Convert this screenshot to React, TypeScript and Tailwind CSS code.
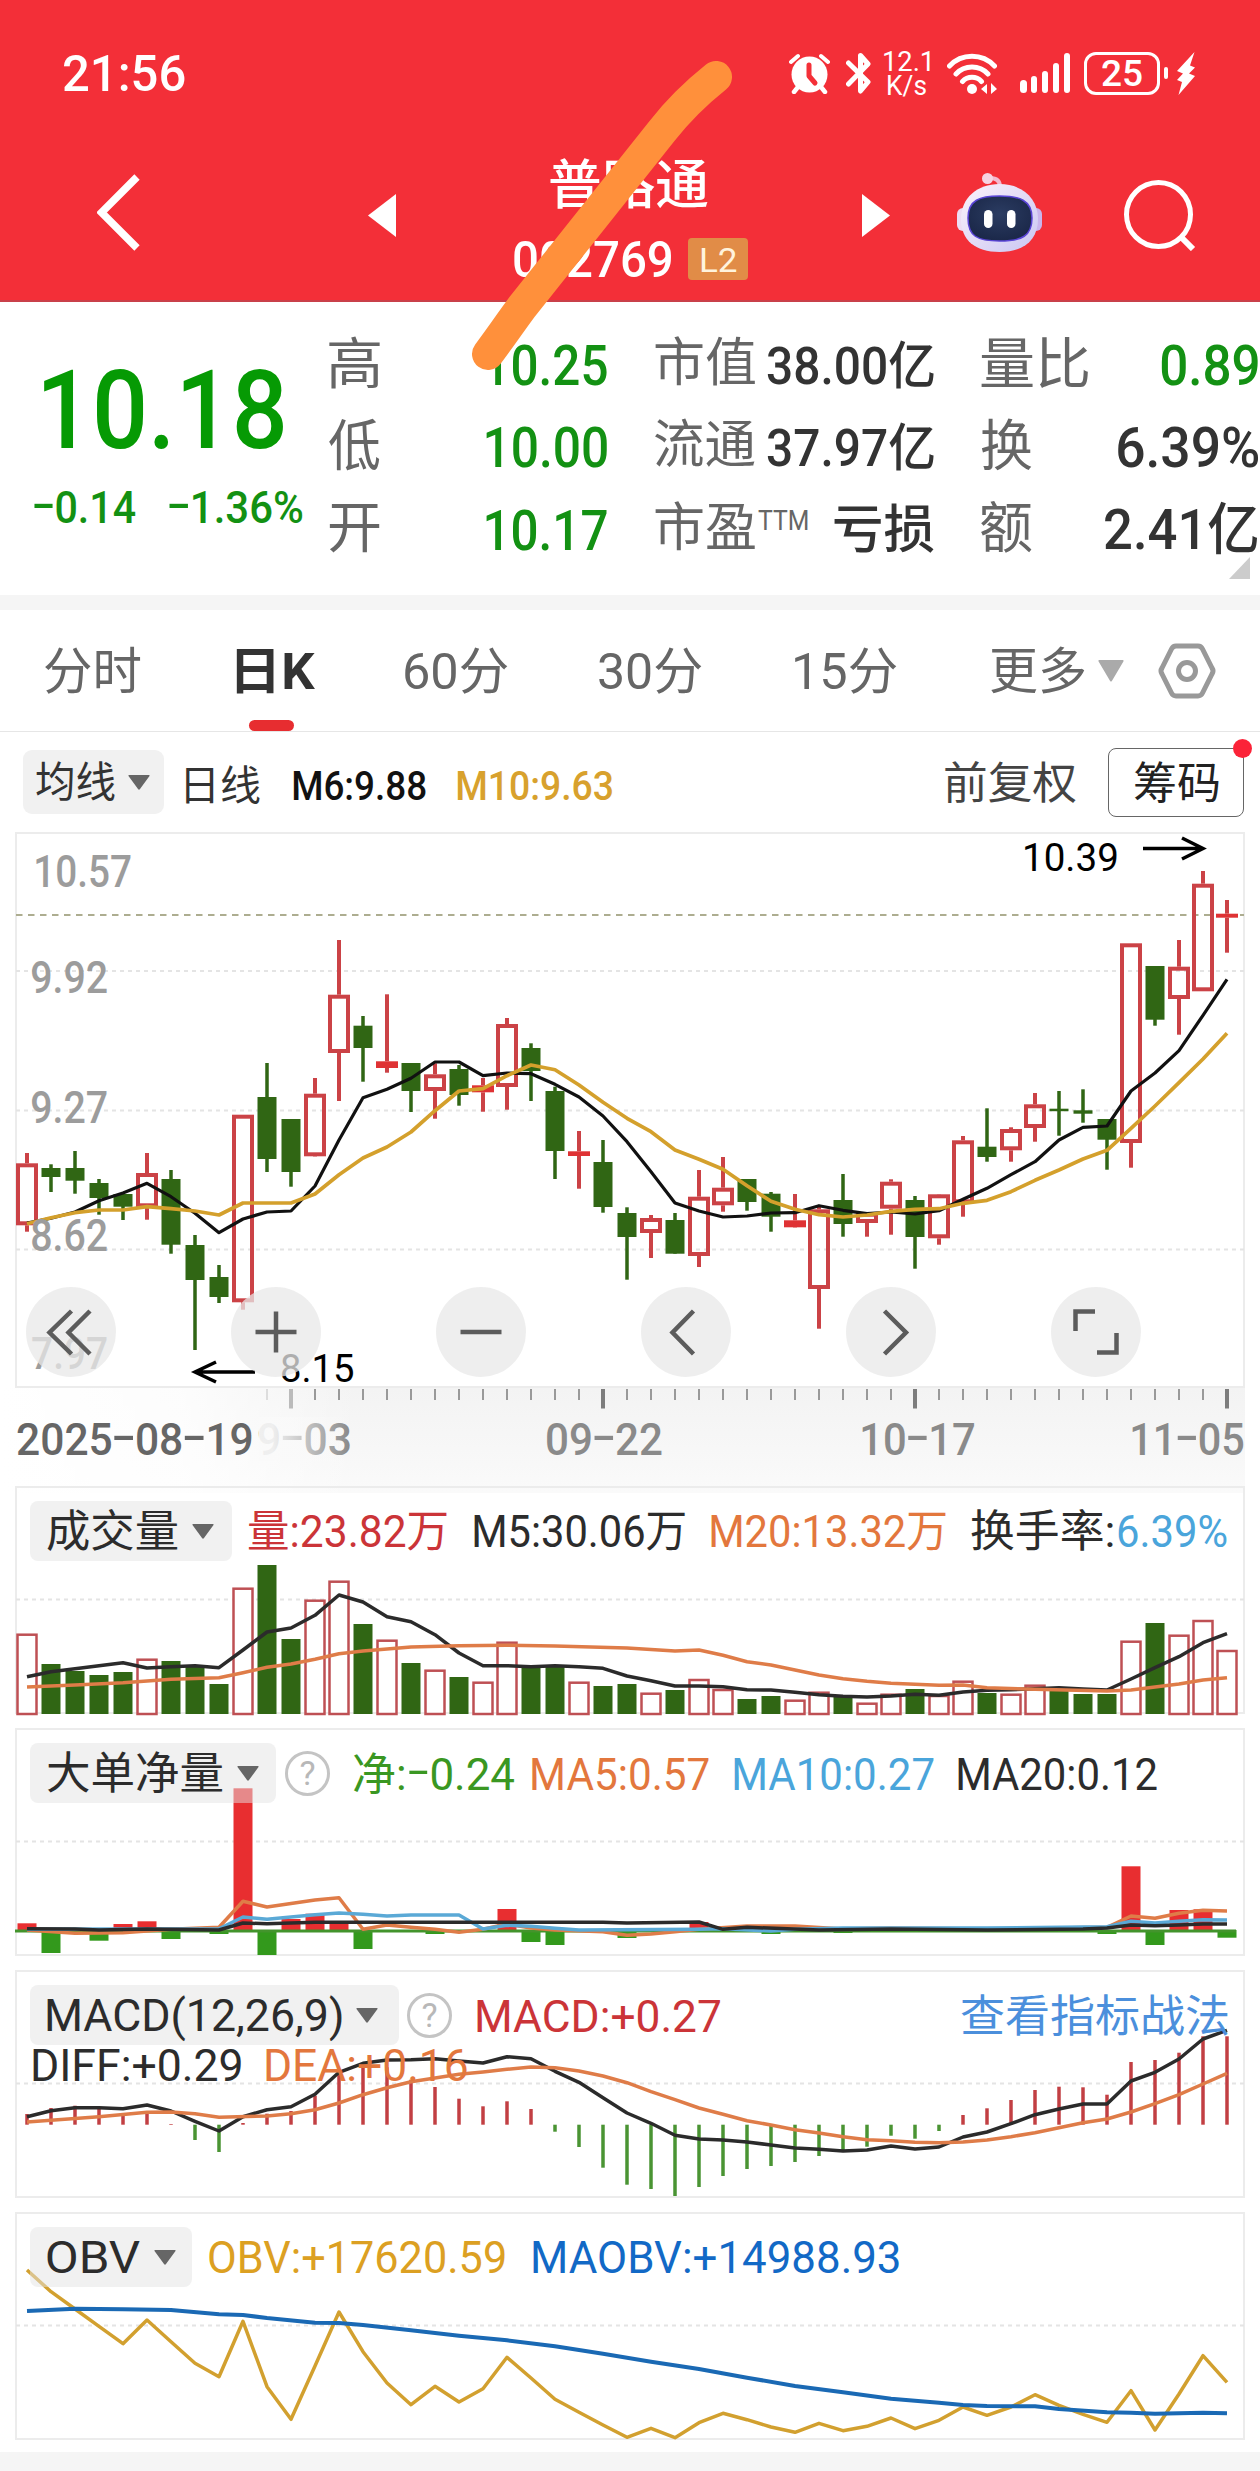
import React, { useLayoutEffect, useRef, useState } from "react";

/* ---------- text ---------- */

const FONT = "font-[Roboto,'Noto_Sans_CJK_SC',sans-serif]";

/** Text whose glyphs are stretched so that they fill the width given by the class. */
function Fit({ children, className = "", inner = "" }: { children: string; className?: string; inner?: string }) {
  const outer = useRef<HTMLSpanElement>(null);
  const span = useRef<HTMLSpanElement>(null);
  const [t, setT] = useState("none");
  useLayoutEffect(() => {
    const o = outer.current;
    const s = span.current;
    const ctx = document.createElement("canvas").getContext("2d");
    if (!o || !s || !ctx) return;
    const cs = getComputedStyle(s);
    ctx.font = `${cs.fontWeight} ${cs.fontSize} ${cs.fontFamily}`;
    const first = ctx.measureText(children[0]);
    const last = ctx.measureText(children[children.length - 1]);
    const left = -first.actualBoundingBoxLeft;
    const right = last.width - last.actualBoundingBoxRight;
    const k = o.clientWidth / (s.offsetWidth - left - right);
    setT(`translate(${-left * k}px, 1px) scaleX(${k})`);
  }, [children]);
  return (
    <span ref={outer} className={`block shrink-0 whitespace-nowrap leading-none ${className}`}>
      <span ref={span} className={`inline-block origin-left ${inner}`} style={{ transform: t }}>
        {children.split(/(-)/).map((p, i) =>
          p === "-" ? (
            <span key={i} className="inline-block w-[0.52em] -translate-y-[0.08em] scale-x-[1.7] text-center">
              -
            </span>
          ) : (
            p
          ),
        )}
      </span>
    </span>
  );
}

function Down({ className = "w-[22px] h-[15px] text-[#666]" }: { className?: string }) {
  return (
    <svg viewBox="0 0 22 15" preserveAspectRatio="none" className={`block shrink-0 ${className}`}>
      <path d="M1 0h20q1 0 .5 1L12 14q-1 1.500-2 0L.5 1Q0 0 1 0z" fill="currentColor" />
    </svg>
  );
}

function Help({ className = "" }: { className?: string }) {
  return (
    <span
      className={`flex h-[45px] w-[45px] shrink-0 items-center justify-center rounded-full border-[3px] border-[#c4c4c4] text-[34px] leading-none text-[#b8b8b8] ${className}`}
    >
      ?
    </span>
  );
}

/* ---------- header ---------- */

function StatusBar() {
  return (
    <div className="flex h-[146px] items-center text-white">
      <Fit className="ml-[64px] w-[121px] text-[50px] font-medium">21:56</Fit>
      <svg className="ml-[604px] h-[41px] w-[41px] shrink-0" viewBox="0 0 41 41">
        <circle cx="20.500" cy="21.500" r="18" fill="#fff" />
        <path d="M2 9L9 3M39 9L32 3" stroke="#fff" strokeWidth="4" strokeLinecap="round" />
        <path d="M9 34l-4 5M32 34l4 5" stroke="#fff" strokeWidth="4.500" strokeLinecap="round" />
        <path d="M20 12v11l6 7" stroke="#f43038" strokeWidth="5" strokeLinecap="round" strokeLinejoin="round" fill="none" />
      </svg>
      <svg className="ml-[16px] h-[41px] w-[25px] shrink-0" viewBox="0 0 25 41" fill="none" stroke="#fff" strokeWidth="5" strokeLinejoin="round" strokeLinecap="round">
        <path d="M2.500 10L22 29l-7.500 9V2.500L22 11 2.500 31" />
      </svg>
      <div className="ml-[13px] flex flex-col items-center">
        <Fit className="w-[46px] text-[28px] !leading-[24px]">12.1</Fit>
        <Fit className="w-[39px] text-[28px] !leading-[24px]">K/s</Fit>
      </div>
      <svg className="ml-[17px] h-[41px] w-[50px] shrink-0" viewBox="0 0 50 41" fill="none" stroke="#fff" strokeLinecap="round">
        <path d="M2.500 13a31 31 0 0 1 45 0M9 21a22 22 0 0 1 32 0M15.500 28.500a13 13 0 0 1 19 0" strokeWidth="5" />
        <circle cx="25" cy="36" r="5" fill="#fff" stroke="none" />
        <path d="M34 36l6-5v10zM50 36l-6-6v11z" fill="#fff" stroke="none" />
      </svg>
      <div className="ml-[23px] flex h-[40px] w-[50px] shrink-0 items-end justify-between">
        <i className="h-[13px] w-[6.5px] rounded-full bg-white" />
        <i className="h-[17px] w-[6.5px] rounded-full bg-white" />
        <i className="h-[22px] w-[6.5px] rounded-full bg-white" />
        <i className="h-[30px] w-[6.5px] rounded-full bg-white" />
        <i className="h-[40px] w-[6.5px] rounded-full bg-white" />
      </div>
      <div className="ml-[14px] flex h-[43px] w-[76px] shrink-0 items-center justify-center rounded-[12px] border-[3px] border-white">
        <Fit className="-mt-[1px] w-[40px] text-[37px] font-medium">25</Fit>
      </div>
      <i className="ml-[4px] h-[12px] w-[4px] shrink-0 rounded-full bg-white" />
      <svg className="ml-[8px] h-[43px] w-[20px] shrink-0" viewBox="0 0 20 43">
        <path d="M18.500 0L1 19l6 2.500-6 6.500 5 2L2.500 43 19 24l-6-2.500 6-6-5-2z" fill="#fff" />
      </svg>
    </div>
  );
}

function Robot() {
  return (
    <svg className="ml-[66px] mt-[27px] h-[80px] w-[87px] shrink-0" viewBox="0 0 87 80">
      <defs>
        <linearGradient id="shell" x1="0" y1="0" x2="1" y2="1">
          <stop offset="0" stopColor="#fbf2fa" />
          <stop offset=".5" stopColor="#e3dcf7" />
          <stop offset="1" stopColor="#c9c6f2" />
        </linearGradient>
        <radialGradient id="face" cx=".5" cy=".4" r=".6">
          <stop offset="0" stopColor="#2b3c62" />
          <stop offset="1" stopColor="#1b2849" />
        </radialGradient>
      </defs>
      <path d="M44 14Q44 5 34 5" fill="none" stroke="#f3b9cf" strokeWidth="4" />
      <circle cx="31.500" cy="5.500" r="5.500" fill="#f6d3e2" />
      <rect x="1" y="35" width="14" height="23" rx="6" fill="#ecdcf3" />
      <rect x="72" y="35" width="14" height="23" rx="6" fill="#c9b5ec" />
      <path d="M43.500 11C66 11 82 25 82 46S68 79 43.500 79 5 67 5 46 21 11 43.500 11z" fill="url(#shell)" />
      <path d="M43.500 23C63 23 76 27 76 45S66 68 43.500 68 12 63 12 45s12-22 31.500-22z" fill="url(#face)" stroke="#5a45d6" strokeWidth="1.500" />
      <rect x="28" y="37" width="8.500" height="18" rx="4.250" fill="#fff" />
      <rect x="51" y="37" width="8.500" height="18" rx="4.250" fill="#fff" />
    </svg>
  );
}

function Header() {
  return (
    <header className="relative h-[302px] border-b-2 border-[#c9404a] bg-[#f32f38]">
      <StatusBar />
      <div className="flex items-start text-white">
        <svg className="ml-[97px] mt-[28px] h-[77px] w-[43px] shrink-0" viewBox="0 0 43 77">
          <path d="M40 3L4.500 38.500 40 74" fill="none" stroke="#fff" strokeWidth="7.500" />
        </svg>
        <svg className="ml-[228px] mt-[48px] h-[43px] w-[28px] shrink-0" viewBox="0 0 28 43">
          <path d="M28 0v43L0 21.500z" fill="#fff" />
        </svg>
        <div className="ml-[118px] w-[234px] shrink-0">
          <div className="flex h-[79px] items-center">
            <Fit className="ml-[36px] w-[158px] text-[53px] font-medium">普路通</Fit>
          </div>
          <div className="flex h-[68px] items-center justify-between">
            <Fit className="w-[158px] text-[50px] font-medium">002769</Fit>
            <div className="flex h-[42px] w-[60px] items-center justify-center rounded-[4px] bg-[#e18c47]">
              <Fit className="w-[35px] text-[34px] text-[#fff3dc]">L2</Fit>
            </div>
          </div>
        </div>
        <svg className="ml-[114px] mt-[48px] h-[43px] w-[28px] shrink-0" viewBox="0 0 28 43">
          <path d="M0 0v43l28-21.500z" fill="#fff" />
        </svg>
        <Robot />
        <svg className="ml-[81px] mt-[33px] h-[72px] w-[72px] shrink-0" viewBox="0 0 72 72" fill="none" stroke="#fff" strokeWidth="5">
          <circle cx="34.500" cy="35.500" r="32" />
          <path d="M56 57l13 13" strokeWidth="6" />
        </svg>
      </div>
    </header>
  );
}

/* ---------- quote ---------- */

function Quote() {
  const label = "-mt-[4px] text-[#666]";
  const green = "text-[#139113] font-medium";
  const dark = "text-[#333] font-medium";
  return (
    <section className="relative flex h-[293px] bg-white">
      <div className="w-[329px] shrink-0">
        <Fit className="ml-[44px] mt-[53px] w-[240px] text-[110px] font-medium text-[#069a04]">10.18</Fit>
        <div className="mt-[20px] flex">
          <Fit className={`ml-[34px] w-[101px] text-[44px] ${green}`}>-0.14</Fit>
          <Fit className={`ml-[34px] w-[134px] text-[44px] ${green}`}>-1.36%</Fit>
        </div>
      </div>
      <div className="mt-[22px] grid h-[247px] w-[931px] grid-cols-[157px_169px_326px_279px] grid-rows-3 items-center">
        <Fit className={`w-[51px] text-[55px] ${label}`}>高</Fit>
        <Fit className={`w-[121px] text-[56px] ${green}`}>10.25</Fit>
        <div className="flex w-[279px] items-center justify-between">
          <Fit className={`w-[100px] text-[52px] ${label}`}>市值</Fit>
          <Fit className={`w-[167px] text-[51px] ${dark}`}>38.00亿</Fit>
        </div>
        <div className="flex w-[277px] items-center justify-between">
          <Fit className={`w-[107px] text-[55px] ${label}`}>量比</Fit>
          <Fit className={`w-[97px] text-[56px] ${green}`}>0.89</Fit>
        </div>
        <Fit className={`w-[51px] text-[55px] ${label}`}>低</Fit>
        <Fit className={`w-[121px] text-[56px] ${green}`}>10.00</Fit>
        <div className="flex w-[279px] items-center justify-between">
          <Fit className={`w-[100px] text-[52px] ${label}`}>流通</Fit>
          <Fit className={`w-[167px] text-[51px] ${dark}`}>37.97亿</Fit>
        </div>
        <div className="flex w-[277px] items-center justify-between">
          <Fit className={`w-[51px] text-[55px] ${label}`}>换</Fit>
          <Fit className={`w-[140px] text-[56px] ${dark}`}>6.39%</Fit>
        </div>
        <Fit className={`w-[51px] text-[55px] ${label}`}>开</Fit>
        <Fit className={`w-[121px] text-[56px] ${green}`}>10.17</Fit>
        <div className="flex w-[279px] items-center">
          <Fit className={`w-[100px] text-[52px] ${label}`}>市盈</Fit>
          <Fit className="mb-[20px] ml-[3px] w-[50px] text-[28px] text-[#666]">TTM</Fit>
          <Fit className={`ml-auto w-[100px] text-[52px] ${dark}`}>亏损</Fit>
        </div>
        <div className="flex w-[277px] items-center justify-between">
          <Fit className={`w-[51px] text-[55px] ${label}`}>额</Fit>
          <Fit className={`-mt-[2px] w-[153px] text-[56px] ${dark}`}>2.41亿</Fit>
        </div>
      </div>
      <svg className="absolute bottom-[16px] right-[10px] h-[22px] w-[21px]" viewBox="0 0 21 22">
        <path d="M21 0v22H0z" fill="#ccc" />
      </svg>
    </section>
  );
}

/* ---------- tabs ---------- */

function Tabs() {
  const tab = "text-[50px] text-[#666]";
  return (
    <nav className="flex h-[122px] items-center border-b border-[#e6e6e6] bg-white">
      <Fit className={`ml-[45px] w-[96px] ${tab}`}>分时</Fit>
      <div className="relative ml-[95px] flex h-full items-center">
        <Fit className="w-[80px] text-[50px] font-bold text-[#333]">日K</Fit>
        <i className="absolute bottom-0 left-[13px] h-[11px] w-[45px] rounded-full bg-[#e72d30]" />
      </div>
      <Fit className={`ml-[89px] w-[103px] ${tab}`}>60分</Fit>
      <Fit className={`ml-[91px] w-[103px] ${tab}`}>30分</Fit>
      <Fit className={`ml-[93px] w-[102px] ${tab}`}>15分</Fit>
      <Fit className={`ml-[94px] w-[94px] ${tab}`}>更多</Fit>
      <Down className="ml-[13px] h-[22px] w-[26px] text-[#aaa]" />
      <svg className="ml-[34px] h-[56px] w-[58px] shrink-0" viewBox="0 0 58 56" fill="none" stroke="#999" strokeWidth="5">
        <path d="M18 3h22q3 0 4.500 3L54 25q2 3 0 6L44.500 50q-1.500 3-4.500 3H18q-3 0-4.500-3L4 31q-2-3 0-6l9.500-19Q15 3 18 3z" strokeLinejoin="round" />
        <circle cx="29" cy="28" r="8.500" />
      </svg>
    </nav>
  );
}

function AverageRow() {
  return (
    <div className="flex h-[100px] items-center">
      <div className="ml-[23px] flex h-[64px] w-[141px] shrink-0 items-center rounded-[9px] bg-[#f1f1f1] pl-[13px]">
        <Fit className="w-[79px] text-[42px] text-[#333]">均线</Fit>
        <Down className="ml-[13px] h-[15px] w-[22px] text-[#666]" />
      </div>
      <Fit className="ml-[22px] mt-[6px] w-[74px] text-[41px] text-[#333]">日线</Fit>
      <Fit className="ml-[33px] mt-[7px] w-[133px] text-[40px] font-medium text-[#111]">M6:9.88</Fit>
      <Fit className="ml-[31px] mt-[7px] w-[155px] text-[40px] font-medium text-[#d8a12d]">M10:9.63</Fit>
      <Fit className="ml-[333px] mt-[2px] w-[131px] text-[44px] text-[#444]">前复权</Fit>
      <div className="relative ml-[32px] flex h-[69px] w-[136px] shrink-0 items-center justify-center rounded-[8px] border-[1.5px] border-[#666]">
        <Fit className="mt-[2px] w-[85px] text-[44px] text-[#222]">筹码</Fit>
        <i className="absolute -right-[9px] -top-[10px] h-[19px] w-[19px] rounded-full bg-[#fb2338]" />
      </div>
    </div>
  );
}

/* ---------- chart data ---------- */

const RED = "#cb4246";
const GREEN = "#306614";
const X = (i: number) => 27 + 24 * i;

type Series = Array<[number, number]>;
const seq = (ys: number[]): Series => ys.map((y, i) => [i, y]);

// kind, high, body top, body bottom, low
const CANDLES: Array<[string, number, number, number, number]> = [
  ["r", 321, 331.3, 393.3, 399.7], ["g", 332.3, 336, 345, 360], ["g", 319, 336, 348.7, 361.7],
  ["g", 347, 351, 366, 382.7], ["g", 361.3, 362, 374.7, 388], ["r", 321, 341, 375.3, 387.7],
  ["g", 338, 347, 412.7, 421.7], ["g", 403, 413, 448, 518], ["g", 433, 445, 465, 471],
  ["r", 282.7, 282.7, 470.3, 477.7], ["g", 231, 265, 327, 340], ["g", 287, 287, 340, 354.7],
  ["r", 246, 261.7, 324.3, 324.7], ["r", 108, 162.7, 221, 269], ["g", 184, 193.7, 216, 249.7],
  ["r", 162.3, 229.3, 236, 240.7], ["g", 231, 231, 259, 280], ["r", 231.3, 242.3, 259, 286.7],
  ["g", 233, 237, 263, 273.7], ["r", 246, 253.3, 260.3, 279.7], ["r", 186, 192, 255, 277.7],
  ["g", 211.3, 216, 239, 269], ["g", 254.7, 259, 319, 347], ["r", 299, 319.3, 324, 356.7],
  ["g", 308, 330, 375, 380.7], ["g", 375.3, 381, 405, 447.7], ["r", 383, 386, 401, 426],
  ["g", 381, 388, 421.7, 421.7], ["r", 338, 364.7, 424, 435], ["r", 325, 355.7, 373.3, 379.7],
  ["g", 347, 347, 370, 378.7], ["g", 360, 361.7, 384.7, 399.7], ["r", 362, 388.3, 395.3, 395.7],
  ["r", 375, 377.3, 457, 496.7], ["g", 342, 368, 392, 404.7], ["r", 380, 380.7, 391, 404.7],
  ["r", 347.3, 349.7, 376.7, 402.7], ["g", 364, 368, 405, 436.7], ["r", 362, 362.3, 406.3, 412.7],
  ["r", 304, 308.3, 371.3, 384.7], ["g", 276.3, 314.7, 325, 329.7], ["r", 295.3, 297, 318.3, 329.7],
  ["r", 261, 272.3, 296, 309.7], ["g", 259, 276.7, 279.2, 303.7], ["g", 257.3, 278.3, 281.7, 290.7],
  ["g", 287, 287, 307.7, 337.7], ["r", 111.3, 111.3, 311, 335.7], ["g", 134, 134, 187.7, 193.7],
  ["r", 108, 134.7, 167, 202.7], ["r", 39, 51.7, 159.3, 159.3], ["r", 68, 81.7, 85.7, 120.7],
];
const MA6 = seq([
  391, 386.3, 380, 368.7, 361, 351.3, 364.7, 381.3, 400.7, 387, 380, 379, 354, 308, 265.7, 257.3, 246.3, 230, 230, 243.7,
  241, 241.7, 252.3, 265, 284, 309.7, 339.7, 371, 379, 385, 384, 381, 380.7, 373.7, 378.3, 381.7, 380, 382, 378.7, 367.3,
  356.3, 342.7, 329.7, 308, 295.3, 294, 259, 241, 218.7, 183.3, 147.3,
]);
const MA10 = seq([
  391.7, 385.7, 380.7, 378, 378, 374.7, 376.7, 379, 383, 371, 371, 371, 362, 342.7, 326, 315, 300, 278.7, 259, 256.7,
  243.7, 233, 237.7, 253, 270.3, 286.3, 299.7, 318, 327.3, 337.3, 353.7, 369.3, 377.3, 382.7, 385, 383, 379.3, 377.3,
  376.7, 371.3, 368.3, 359.7, 348.3, 338, 327, 318.3, 296.3, 274, 250.7, 227, 201.3,
]);

const VOLUME: Array<[string, number]> = [
  ["r", 147.7], ["g", 178], ["g", 185], ["g", 189], ["g", 186], ["r", 172.7], ["g", 175], ["g", 180.7], ["g", 198],
  ["r", 101.7], ["g", 79], ["g", 153], ["r", 113.7], ["r", 94.7], ["g", 138], ["r", 153.7], ["g", 177], ["r", 183.7],
  ["g", 191], ["r", 195.7], ["r", 155.7], ["g", 181], ["g", 181], ["r", 195.7], ["g", 200], ["g", 198], ["r", 206.7],
  ["g", 204], ["r", 193], ["r", 203], ["g", 213], ["g", 210], ["r", 213.7], ["r", 205.7], ["g", 211], ["r", 216.7],
  ["r", 207.7], ["g", 203], ["r", 209], ["r", 194.7], ["g", 207], ["r", 207.7], ["r", 198.7], ["g", 204.7], ["g", 208],
  ["g", 208], ["r", 154.7], ["g", 137], ["r", 148.7], ["r", 134], ["r", 164],
];
const VOL5 = seq([
  190.7, 185.7, 182.7, 179.7, 176.7, 182, 180.7, 179.7, 181.7, 164, 146, 142, 129.3, 109, 116, 130.7, 135.7, 148.7, 167,
  179.7, 179.7, 180.7, 179.7, 180.7, 182.3, 190, 194.7, 200, 200, 200.7, 203.7, 204, 206.3, 208.7, 210.3, 211, 210, 208.3,
  209.3, 206, 204.3, 203.7, 202.7, 201.7, 203, 204, 193, 181.7, 170.7, 156.7, 147.7,
]);
const VOL20: Series = [
  [0, 201], [2, 199], [4, 196.7], [6, 193.3], [8, 191.7], [9, 186.7], [10, 181.3], [11, 178], [12, 173.3], [13, 167.7],
  [14, 165], [16, 161], [18, 159.7], [20, 159.3], [22, 160], [25, 162], [27, 165], [28, 164], [29, 169.3], [30, 175.7],
  [31, 179], [32, 184], [33, 189], [34, 192.7], [35, 195.3], [36, 197.3], [38, 199.3], [39, 199], [40, 201.7],
  [42, 203.3], [45, 205], [46, 204], [47, 201], [48, 198], [49, 194], [50, 191.7],
];

const NET: Series = [
  [0, 195.3], [1, 225], [3, 212.7], [4, 196], [5, 193.3], [6, 211], [8, 206], [9, 60.3], [10, 227], [11, 191],
  [12, 185.7], [13, 193.3], [14, 221], [17, 206], [20, 181], [21, 214], [22, 217], [25, 210], [28, 194], [31, 206],
  [34, 205], [45, 206], [46, 138.3], [47, 217], [48, 182], [49, 181.3], [50, 209.7],
];
const NET20: Series = [
  [0, 200.7], [2, 201], [3, 202], [5, 201], [8, 202], [9, 195], [10, 195.7], [12, 194.3], [20, 194.3], [24, 194.3],
  [25, 195], [28, 194], [29, 201.3], [30, 199.3], [33, 202], [36, 201], [40, 202], [44, 201], [45, 200], [46, 197],
  [47, 197.7], [48, 197], [49, 196], [50, 196],
];
const NET5: Series = [
  [0, 202], [2, 205.3], [4, 204.7], [6, 201.3], [8, 199.3], [9, 173.3], [10, 179], [12, 172], [13, 169.7], [14, 201.3],
  [15, 197], [16, 199.3], [17, 201.3], [18, 204.3], [19, 201.3], [20, 196], [21, 200], [22, 202], [24, 203.7],
  [25, 207.3], [26, 206], [27, 203.7], [28, 201.3], [30, 198], [32, 198], [34, 201], [36, 200], [40, 201], [45, 199.3],
  [46, 188], [47, 190.3], [48, 185.3], [49, 182.3], [50, 183],
];
const NET10: Series = [
  [0, 201.3], [8, 200.7], [9, 189], [10, 191.3], [11, 189], [12, 186.7], [13, 185], [14, 186.3], [15, 188], [16, 187],
  [18, 187], [19, 201], [20, 197.3], [21, 198.3], [22, 200.3], [23, 202], [28, 201.3], [29, 200.7], [31, 203],
  [32, 201.3], [34, 200], [40, 200], [45, 198.7], [46, 193.3], [47, 195], [48, 193.3], [49, 191.7], [50, 192],
];

const MACD = [
  144, 138, 135.7, 137.7, 144.7, 143, 154, 170, 182, 153, 143.7, 141, 125.7, 103, 95, 97.3, 109.7, 117, 128.7, 136.3,
  131.3, 139, 161.7, 177, 197.7, 214.7, 219, 226, 217, 206, 199, 196, 192, 186, 181.3, 176.7, 165.7, 168.7, 161, 145,
  138.3, 130, 120, 116.7, 117.3, 124.7, 92, 90, 82.7, 66.3, 66.3,
];
const DIFF = seq([
  146.7, 140.7, 137.7, 137.7, 138.7, 135, 141, 151.3, 161, 146.7, 139.7, 136.7, 124.3, 102.3, 93.3, 90, 89.7, 88.7, 91,
  93, 86.7, 88.7, 101.3, 112.3, 127.7, 143, 153.3, 165.3, 169, 170, 172, 175, 178, 179.3, 181, 180, 176, 179, 177, 167,
  162, 153.7, 144.7, 139, 134, 134, 111, 102.3, 89, 69, 60.3,
]);
const DEA: Series = [
  [0, 152], [3, 146.7], [5, 142.3], [6, 142], [7, 143.7], [8, 147.3], [10, 146], [11, 143.7], [12, 139.7], [13, 133],
  [14, 124.7], [15, 117.7], [16, 111.7], [17, 108], [18, 104.3], [19, 102], [20, 99.3], [21, 97], [22, 97.7], [23, 101],
  [24, 106], [25, 112.7], [26, 121.7], [27, 129.7], [28, 138], [29, 144.3], [30, 150.7], [31, 155], [32, 159.7],
  [33, 163], [34, 166.7], [35, 169.7], [36, 170.7], [37, 172.3], [38, 172.7], [39, 172], [40, 170], [41, 166.7],
  [42, 162.7], [43, 157.7], [44, 152.7], [45, 149], [46, 142], [47, 133.7], [48, 124.7], [49, 114], [50, 103.3],
];
const OBV = seq([
  58, 79.7, 97, 114.3, 131.7, 108, 129.7, 151.3, 164.7, 109.3, 174.7, 207.3, 154, 100, 139.7, 171, 192.7, 174.3, 190,
  176.7, 145.3, 166, 187.3, 200.3, 213, 225.3, 216.3, 225.7, 210.7, 201.3, 207.7, 215, 220.3, 211.3, 218.7, 214.3, 206,
  216.7, 208.3, 195, 203.3, 195, 182.7, 193.3, 202.3, 210.3, 178.7, 218, 182, 143.7, 170.3,
]);
const MAOBV: Series = [
  [0, 99], [2, 96.7], [4, 97.3], [6, 98], [8, 102.3], [9, 103], [10, 106], [12, 110.7], [13, 111], [14, 113],
  [16, 118.3], [18, 123.7], [20, 128.3], [22, 134.3], [24, 141.7], [26, 149.7], [28, 157], [30, 165.7], [32, 174],
  [34, 180.3], [36, 186.7], [38, 190.7], [39, 193], [40, 194], [42, 194.3], [43, 197], [45, 200.3], [46, 200.7],
  [47, 201.7], [49, 200.7], [50, 201.3],
];

function Line({ data, color, w = 3.5 }: { data: Series; color: string; w?: number }) {
  return (
    <polyline
      points={data.map(([i, y]) => `${X(i)},${y}`).join(" ")}
      fill="none"
      stroke={color}
      strokeWidth={w}
      strokeLinejoin="round"
    />
  );
}

function Grid({ y }: { y: number }) {
  return <path d={`M16 ${y}H1244`} stroke="#e4e4e4" strokeWidth="2" strokeDasharray="4 4" />;
}

/* ---------- main chart ---------- */

function RoundButton({ d }: { d: string }) {
  return (
    <button className="h-[90px] w-[90px] shrink-0 rounded-full bg-[#e8e8e8]/75">
      <svg viewBox="0 0 90 90" className="block h-full w-full">
        <path d={d} fill="none" stroke="#5c5c5c" strokeWidth="4.500" />
      </svg>
    </button>
  );
}

function PriceChart() {
  return (
    <section className="relative ml-[15px] h-[556px] w-[1230px] border-2 border-[#ececec]">
      <svg viewBox="15 0 1230 556" className="absolute -left-[2px] -top-[2px] h-[556px] w-[1230px] overflow-visible">
        <Grid y={139} />
        <Grid y={278.5} />
        <Grid y={417.5} />
        <path d="M16 83H1244" stroke="#adad90" strokeWidth="2" strokeDasharray="6.500 5.500" />
        {CANDLES.map(([k, hi, a, b, lo], i) => {
          const x = X(i);
          if (k === "g")
            return (
              <g key={i} fill={GREEN}>
                <rect x={x - 1.75} y={hi} width="3.500" height={lo - hi} />
                <rect x={x - 9.5} y={a} width="19" height={b - a} />
              </g>
            );
          const solid = b - a < 8;
          return (
            <g key={i} fill={RED}>
              <rect x={x - 2} y={hi} width="4" height={Math.max(0, a - hi)} />
              <rect x={x - 2} y={b} width="4" height={Math.max(0, lo - b)} />
              {solid ? (
                <rect x={x - 11} y={a} width="22" height={b - a} fill="#df3234" />
              ) : (
                <rect x={x - 9} y={a + 2} width="18" height={b - a - 4} fill="none" stroke={RED} strokeWidth="4" />
              )}
            </g>
          );
        })}
        <Line data={MA6} color="#111" w={3.2} />
        <Line data={MA10} color="#d4a02c" w={3.7} />
        <path d="M1143 16.500H1202M1182 6l21 10.500-21 10.500" fill="none" stroke="#000" strokeWidth="3.500" />
        <path d="M255 540H196M216 530l-21 10 21 10" fill="none" stroke="#000" strokeWidth="3.500" />
      </svg>
      <div className="absolute left-[19px] top-[15px] text-[44px] font-medium text-[#9c9c9c]">
        <Fit className="w-[95px]">10.57</Fit>
        <Fit className="-ml-[4px] mt-[62px] w-[75px]">9.92</Fit>
        <Fit className="-ml-[4px] mt-[86px] w-[75px]">9.27</Fit>
        <Fit className="-ml-[4px] mt-[84px] w-[75px]">8.62</Fit>
        <Fit className="-ml-[4px] mt-[74px] w-[75px]">7.97</Fit>
      </div>
      <Fit className="absolute right-[127px] top-[4px] w-[91px] text-[38px] text-black">10.39</Fit>
      <Fit className="absolute bottom-[-1px] left-[265px] w-[71px] text-[38px] text-black">8.15</Fit>
      <div className="absolute bottom-[9px] left-[9px] flex gap-[115px]">
        <RoundButton d="M45.500 24L23.500 45.500 45.500 67M64 24L42.500 45.500 64 67" />
        <RoundButton d="M24.500 45h41M45 24.500v41" />
        <RoundButton d="M24.500 45h41" />
        <RoundButton d="M52.500 24L31.500 45.500 52.500 67" />
        <RoundButton d="M38.500 24L60 45.500 38.500 67" />
        <RoundButton d="M44 24.500H24.500V44M46 65.500H65.500V46" />
      </div>
    </section>
  );
}

function DateAxis() {
  const t = "text-[44px] font-medium text-[#8a8a8a]";
  return (
    <div className="relative h-[105px]">
      <div className="absolute inset-y-0 left-0 w-[1245px] bg-linear-to-b from-[#f3f3f3] to-[#fafafa]" />
      <div className="absolute inset-y-0 left-0 w-[360px] bg-linear-to-r from-white via-white/80 to-white/0" />
      <svg viewBox="0 0 1260 24" className="absolute left-0 top-0 h-[24px] w-[1260px]">
        {Array.from({ length: 41 }, (_, k) => k + 10).map((i) =>
          (i - 11) % 13 === 0 ? (
            <path key={i} d={`M${X(i)} 1V20.500`} stroke={i === 11 ? "#bbb" : "#7d7d7d"} strokeWidth="4" />
          ) : (
            <path key={i} d={`M${X(i)} 1V12`} stroke={i === 10 ? "#ddd" : "#999"} strokeWidth="2" />
          ),
        )}
      </svg>
      <div className="relative flex pt-[29px]">
        <Fit className="ml-[17px] w-[235px] text-[44px] font-medium text-[#666]">2025-08-19</Fit>
        <div className="relative ml-[7px]">
          <Fit className={`w-[91px] ${t}`}>9-03</Fit>
          <i className="absolute inset-0 bg-linear-to-r from-[#fafafa]/90 from-15% to-[#fafafa]/0" />
        </div>
        <Fit className={`ml-[197px] w-[115px] ${t}`}>09-22</Fit>
        <Fit className={`ml-[200px] w-[113px] ${t}`}>10-17</Fit>
        <Fit className={`ml-[157px] w-[112px] ${t}`}>11-05</Fit>
      </div>
    </div>
  );
}

/* ---------- indicator panels ---------- */

function Panel({ chart, children, className = "" }: { chart: React.ReactNode; children: React.ReactNode; className?: string }) {
  return (
    <section className={`relative ml-[15px] h-[228px] w-[1230px] border-2 border-[#ececec] ${className}`}>
      <svg viewBox="15 0 1230 228" className="absolute -left-[2px] -top-[2px] h-[228px] w-[1230px] overflow-visible">
        <Grid y={113.5} />
        {chart}
      </svg>
      <div className="relative">{children}</div>
    </section>
  );
}

function Picker({ label, box, text }: { label: string; box: string; text: string }) {
  return (
    <div className={`ml-[13px] flex h-[60px] shrink-0 items-center rounded-[8px] bg-[#e3e3e3]/50 pl-[17px] ${box}`}>
      <Fit className={`text-[44px] text-[#2c2c2c] ${text}`}>{label}</Fit>
      <Down className="ml-[14px] h-[15px] w-[22px] text-[#666]" />
    </div>
  );
}

const row = "flex h-[60px] items-center mt-[13px] text-[44px]";

function VolumePanel() {
  return (
    <Panel
      className="-mt-[7px]"
      chart={
        <>
          {VOLUME.map(([k, y], i) =>
            k === "g" ? (
              <rect key={i} x={X(i) - 9.5} y={y} width="19" height={228 - y} fill={GREEN} />
            ) : (
              <rect key={i} x={X(i) - 9.5} y={y + 1} width="19" height={227 - y} fill="#fff" stroke="#be5054" strokeWidth="2.500" />
            ),
          )}
          <Line data={VOL5} color="#2b2b2b" />
          <Line data={VOL20} color="#df7c48" />
        </>
      }
    >
      <div className={row}>
        <Picker label="成交量" box="w-[202px]" text="w-[131px]" />
        <Fit className="ml-[17px] w-[198px] text-[#cb3438]">量:23.82万</Fit>
        <Fit className="ml-[27px] w-[211px] text-[#2c2c2c]">M5:30.06万</Fit>
        <Fit className="ml-[26px] w-[235px] text-[#e3773d]">M20:13.32万</Fit>
        <Fit className="ml-[25px] w-[142px] text-[#2c2c2c]">换手率:</Fit>
        <Fit className="ml-[5px] w-[109px] text-[#4aa5db]">6.39%</Fit>
      </div>
    </Panel>
  );
}

function NetPanel() {
  return (
    <Panel
      className="mt-[14px]"
      chart={
        <>
          {NET.map(([i, y]) => (
            <rect
              key={i}
              x={X(i) - 9.5}
              y={Math.min(y, 202)}
              width="19"
              height={Math.abs(y - 202)}
              fill={y < 202 ? "#e82e30" : "#33991c"}
            />
          ))}
          <path d="M15 203H1236" stroke="#43942c" strokeWidth="3" />
          <Line data={NET5} color="#df7c48" />
          <Line data={NET10} color="#5aa9d6" />
          <Line data={NET20} color="#2b2b2b" />
        </>
      }
    >
      <div className={row}>
        <Picker label="大单净量" box="w-[246px]" text="w-[176px]" />
        <Help className="ml-[9px]" />
        <Fit className="ml-[24px] mt-[2px] w-[160px] text-[#3a9722]">净:-0.24</Fit>
        <Fit className="ml-[18px] mt-[2px] w-[177px] text-[#e3773d]">MA5:0.57</Fit>
        <Fit className="ml-[25px] mt-[2px] w-[199px] text-[#4aa5db]">MA10:0.27</Fit>
        <Fit className="ml-[25px] mt-[2px] w-[199px] text-[#2c2c2c]">MA20:0.12</Fit>
      </div>
    </Panel>
  );
}

function MacdPanel() {
  return (
    <Panel
      className="mt-[14px]"
      chart={
        <>
          {MACD.map((y, i) => (
            <path key={i} d={`M${X(i)} 154.700V${y}`} stroke={y < 154.7 ? "#c23f43" : "#4a9433"} strokeWidth="3.500" />
          ))}
          <Line data={DIFF} color="#2b2b2b" />
          <Line data={DEA} color="#df7c48" />
        </>
      }
    >
      <div className={row}>
        <Picker label="MACD(12,26,9)" box="w-[369px]" text="w-[295px]" />
        <Help className="ml-[8px]" />
        <Fit className="ml-[25px] mt-[2px] w-[243px] text-[#cb3438]">MACD:+0.27</Fit>
        <Fit className="ml-[241px] mt-[2px] w-[267px] text-[#4b8fdc]">查看指标战法</Fit>
      </div>
      <div className="-mt-[2px] flex text-[44px]">
        <Fit className="ml-[16px] w-[208px] text-[#2c2c2c]">DIFF:+0.29</Fit>
        <Fit className="ml-[25px] w-[201px] text-[#e3773d]">DEA:+0.16</Fit>
      </div>
    </Panel>
  );
}

function ObvPanel() {
  return (
    <Panel
      className="mt-[14px]"
      chart={
        <>
          <Line data={OBV} color="#d2a02f" w={3.5} />
          <Line data={MAOBV} color="#1a69b4" w={4} />
        </>
      }
    >
      <div className={row}>
        <Picker label="OBV" box="w-[162px]" text="w-[93px]" />
        <Fit className="ml-[17px] w-[296px] text-[#dca022]">OBV:+17620.59</Fit>
        <Fit className="ml-[28px] w-[366px] text-[#1269c6]">MAOBV:+14988.93</Fit>
      </div>
    </Panel>
  );
}

export default function App() {
  return (
    <main className={`relative flex h-[2471px] w-[1260px] flex-col overflow-hidden bg-white ${FONT}`}>
      <Header />
      <Quote />
      <div className="h-[15px] bg-[#f5f5f5]" />
      <Tabs />
      <AverageRow />
      <PriceChart />
      <DateAxis />
      <VolumePanel />
      <NetPanel />
      <MacdPanel />
      <ObvPanel />
      <div className="mt-[12px] grow bg-[#f5f5f5]" />
      <svg className="pointer-events-none absolute left-0 top-0 h-[400px] w-[1260px]" viewBox="0 0 1260 400">
        <path
          d="M716 77C696 93 676 113 662 131L522 307C508 326 500 338 488 354"
          fill="none"
          stroke="#ff903b"
          strokeWidth="32"
          strokeLinecap="round"
          strokeLinejoin="round"
        />
      </svg>
    </main>
  );
}
